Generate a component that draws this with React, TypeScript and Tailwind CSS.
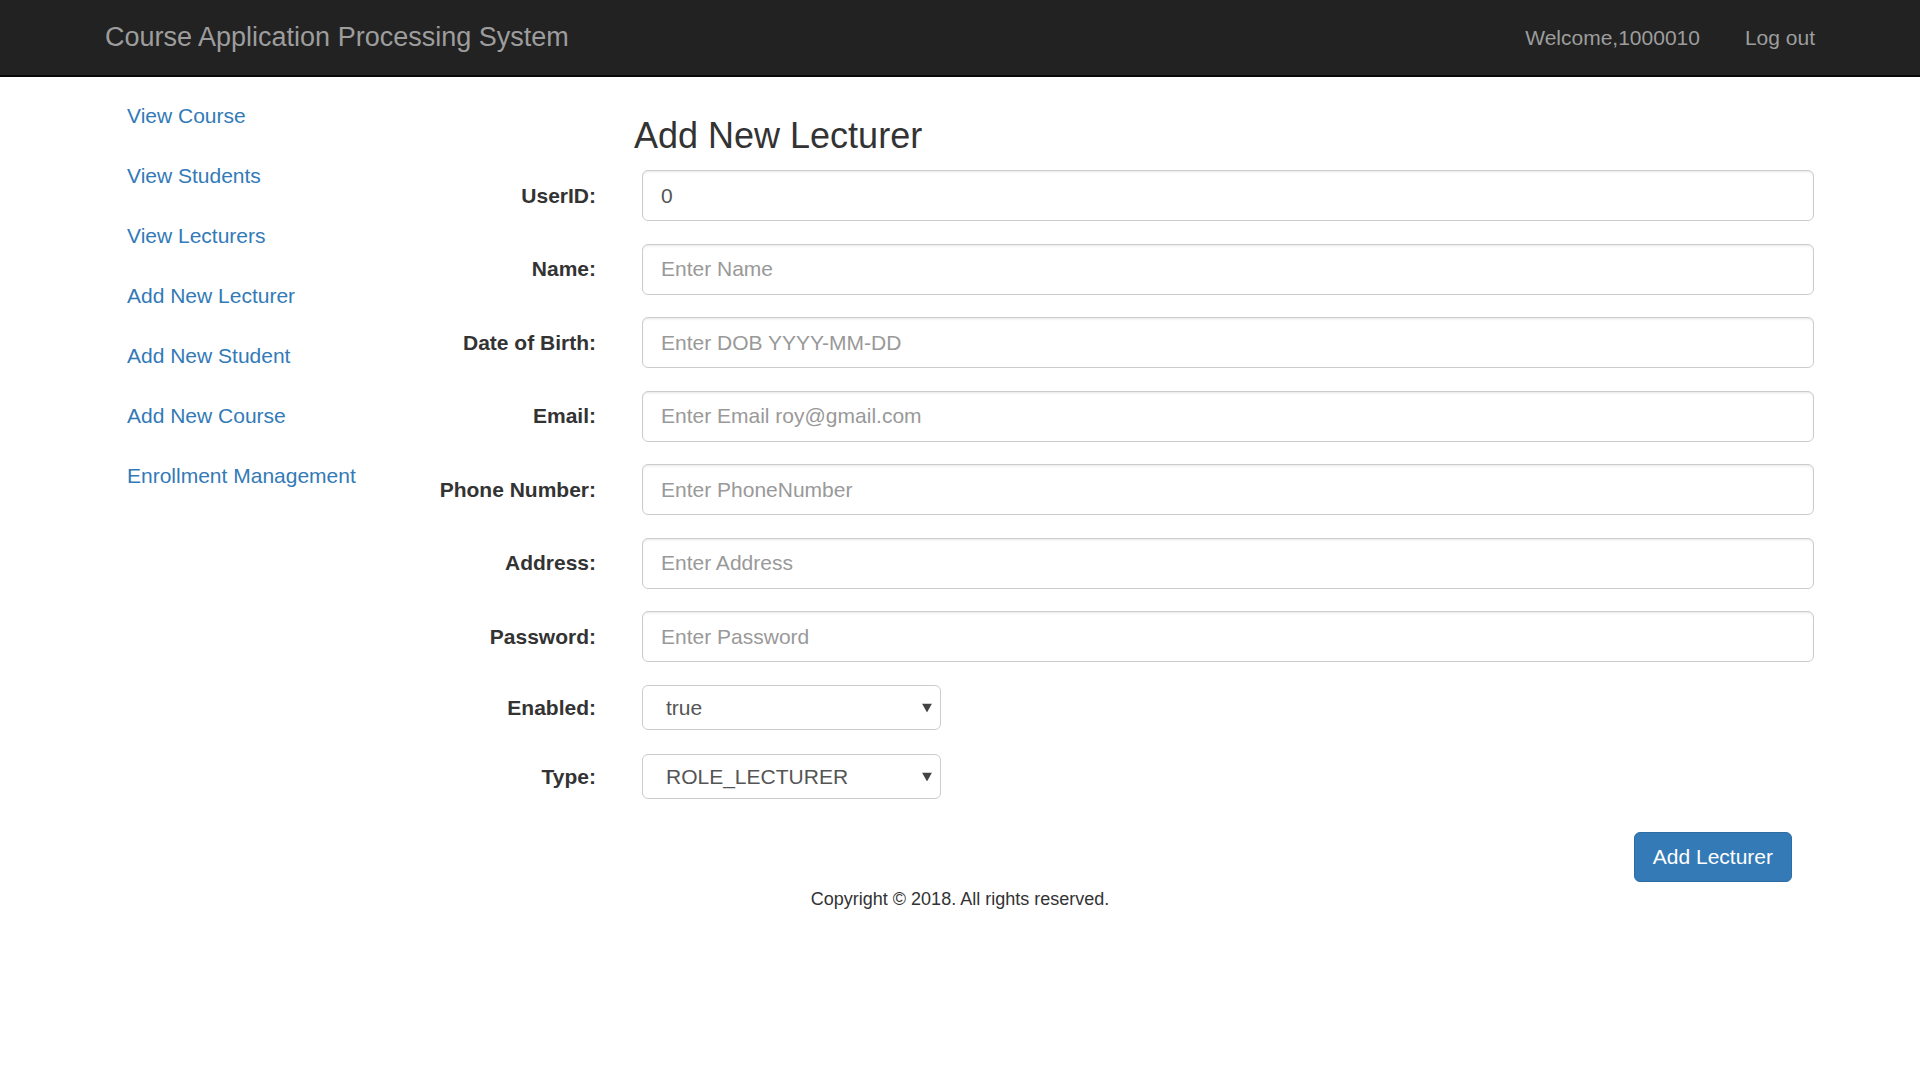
import React from "react";

const links = [
  "View Course",
  "View Students",
  "View Lecturers",
  "Add New Lecturer",
  "Add New Student",
  "Add New Course",
  "Enrollment Management",
];

const fields: { label: string; placeholder?: string; value?: string }[] = [
  { label: "UserID:", value: "0" },
  { label: "Name:", placeholder: "Enter Name" },
  { label: "Date of Birth:", placeholder: "Enter DOB YYYY-MM-DD" },
  { label: "Email:", placeholder: "Enter Email roy@gmail.com" },
  { label: "Phone Number:", placeholder: "Enter PhoneNumber" },
  { label: "Address:", placeholder: "Enter Address" },
  { label: "Password:", placeholder: "Enter Password" },
];

function Select({ value }: { value: string }) {
  return (
    <div className="relative w-[299px] h-[45px]">
      <select
        defaultValue={value}
        className="appearance-none w-full h-full border-[1.5px] border-[#ccc] rounded-[6px] bg-white pl-[23px] text-[21px] text-[#555] outline-none"
      >
        <option>{value}</option>
      </select>
      <svg
        className="pointer-events-none absolute right-[9px] top-1/2 -translate-y-1/2"
        width="10"
        height="9"
        viewBox="0 0 10 9"
      >
        <polygon points="0,0 10,0 5,9" fill="#444" />
      </svg>
    </div>
  );
}

export default function App() {
  return (
    <div className="w-[1920px] min-h-[1080px] bg-white text-[#333] font-['Liberation_Sans',Arial,sans-serif]">
      <nav className="h-[77px] bg-[#222] border-b-2 border-[#080808] flex items-center justify-between pl-[105px] pr-[105px]">
        <span className="text-[27px] text-[#9d9d9d] leading-none">Course Application Processing System</span>
        <div className="flex items-center gap-[45px] text-[21px] text-[#9d9d9d]">
          <span>Welcome,1000010</span>
          <span>Log out</span>
        </div>
      </nav>

      <div className="flex items-start">
        <aside className="w-[400px] pl-[105px] pt-[9px]">
          <ul>
            {links.map((l) => (
              <li key={l}>
                <a className="block px-[22px] py-[15px] text-[21px] leading-[30px] text-[#337ab7]">{l}</a>
              </li>
            ))}
          </ul>
        </aside>

        <main className="flex-1 pr-[106px] pt-[39px]">
          <h3 className="pl-[234px] text-[36px] leading-[40px] font-normal text-[#333] mb-[14px]">Add New Lecturer</h3>
          <div className="flex flex-col gap-[22.5px]">
            {fields.map((f) => (
              <div key={f.label} className="flex items-center gap-[46px]">
                <label className="w-[196px] text-right font-bold text-[21px]">{f.label}</label>
                <input
                  className="flex-1 h-[51px] border-[1.5px] border-[#ccc] rounded-[6px] px-[18px] text-[21px] text-[#555] placeholder:text-[#999] shadow-[inset_0_1.5px_1.5px_rgba(0,0,0,0.075)] outline-none"
                  placeholder={f.placeholder}
                  defaultValue={f.value}
                />
              </div>
            ))}
          </div>
          <div className="flex flex-col gap-[24px] mt-[23px]">
            <div className="flex items-center gap-[46px]">
              <label className="w-[196px] text-right font-bold text-[21px]">Enabled:</label>
              <Select value="true" />
            </div>
            <div className="flex items-center gap-[46px]">
              <label className="w-[196px] text-right font-bold text-[21px]">Type:</label>
              <Select value="ROLE_LECTURER" />
            </div>
          </div>
          <div className="flex justify-end pr-[22px] mt-[33px]">
            <button className="h-[50px] px-[18px] bg-[#337ab7] border-[1.5px] border-[#2e6da4] rounded-[6px] text-white text-[21px]">
              Add Lecturer
            </button>
          </div>
        </main>
      </div>

      <footer className="text-center text-[18px] leading-[27px] text-[#333] mt-[4px]">
        Copyright © 2018. All rights reserved.
      </footer>
    </div>
  );
}
